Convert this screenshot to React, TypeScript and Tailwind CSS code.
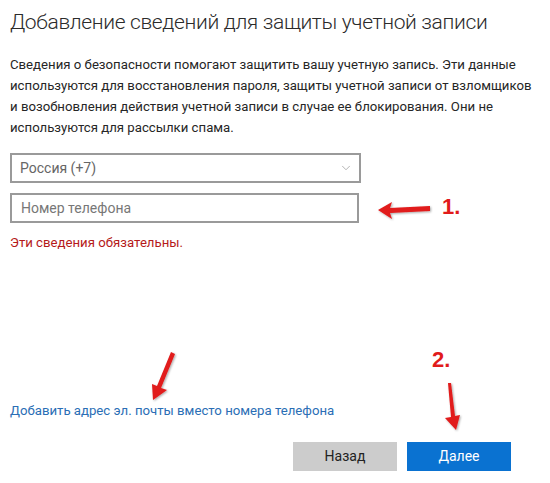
import { ChevronDown } from "lucide-react";

function Arrow({ className, d }: { className: string; d: string }) {
  return (
    <svg className={className} viewBox="0 0 60 60" fill="none">
      <defs>
        <filter id="sh" x="-20%" y="-20%" width="140%" height="140%">
          <feDropShadow dx="1" dy="1" stdDeviation="0.8" floodOpacity="0.35" />
        </filter>
      </defs>
      <path d={d} fill="#e11b1b" filter="url(#sh)" />
    </svg>
  );
}

export default function App() {
  return (
    <div
      className="relative w-[550px] h-[483px] overflow-hidden bg-white px-[10px] text-[#262626]"
      style={{ fontFamily: "Roboto, 'Noto Sans', sans-serif" }}
    >
      <h1 className="pt-[6px] text-[21px] leading-[32px] font-light tracking-[-0.35px] text-[#2b2b2b] whitespace-nowrap">
        Добавление сведений для защиты учетной записи
      </h1>

      <p className="mt-[16px] text-[13.2px] leading-[21px] whitespace-nowrap">
        Сведения о безопасности помогают защитить вашу учетную запись. Эти данные
        <br />
        используются для восстановления пароля, защиты учетной записи от взломщиков
        <br />
        и возобновления действия учетной записи в случае ее блокирования. Они не
        <br />
        используются для рассылки спама.
      </p>

      <div className="mt-[15px] flex w-[351px] h-[30px] items-center justify-between border-2 border-[#9a9a9a] pl-[8px] pr-[6px] text-[14px] text-[#666]">
        <span>Россия (+7)</span>
        <ChevronDown className="h-[14px] w-[14px] text-[#999]" strokeWidth={1.25} />
      </div>

      <div className="mt-[10px] flex w-[349px] h-[30px] items-center border-2 border-[#9a9a9a] px-[9px] text-[14px] text-[#777]">
        Номер телефона
      </div>

      <div className="mt-[10px] text-[13.2px] leading-[20px] text-[#b51a1a]">Эти сведения обязательны.</div>

      <div className="mt-[148px] text-[13.2px] leading-[20px] text-[#2a6eb5]">
        Добавить адрес эл. почты вместо номера телефона
      </div>

      <div className="mt-[21px] flex justify-end gap-[10px] pr-[29px]">
        <button className="h-[29px] w-[104px] bg-[#cccccc] text-[14px] text-[#222]">Назад</button>
        <button className="h-[29px] w-[104px] bg-[#0a72d1] text-[14px] text-white">Далее</button>
      </div>

      {/* annotations */}
      <Arrow
        className="absolute left-[374px] top-[183px] w-[60px] h-[60px]"
        d="M4 27 L18 19 L16 25 L56 23 L56 28 L16 30 L18 36 Z"
      />
      <span
        className="absolute left-[442px] top-[195px] text-[22px] leading-[24px] font-bold text-[#e11b1b]"
        style={{ fontFamily: "'Liberation Sans', Arial, sans-serif" }}
      >
        1.
      </span>

      <Arrow
        className="absolute left-[135px] top-[348px] w-[60px] h-[60px]"
        d="M36 4 L40 6 L26 40 L32 42 L18 52 L17 36 L22 38 Z"
      />

      <span
        className="absolute left-[432px] top-[348px] text-[22px] leading-[24px] font-bold text-[#e11b1b]"
        style={{ fontFamily: "'Liberation Sans', Arial, sans-serif" }}
      >
        2.
      </span>
      <Arrow
        className="absolute left-[424px] top-[378px] w-[60px] h-[60px]"
        d="M24 5 L27 5 L31 38 L36 37 L32 52 L21 40 L27 39 Z"
      />
    </div>
  );
}
